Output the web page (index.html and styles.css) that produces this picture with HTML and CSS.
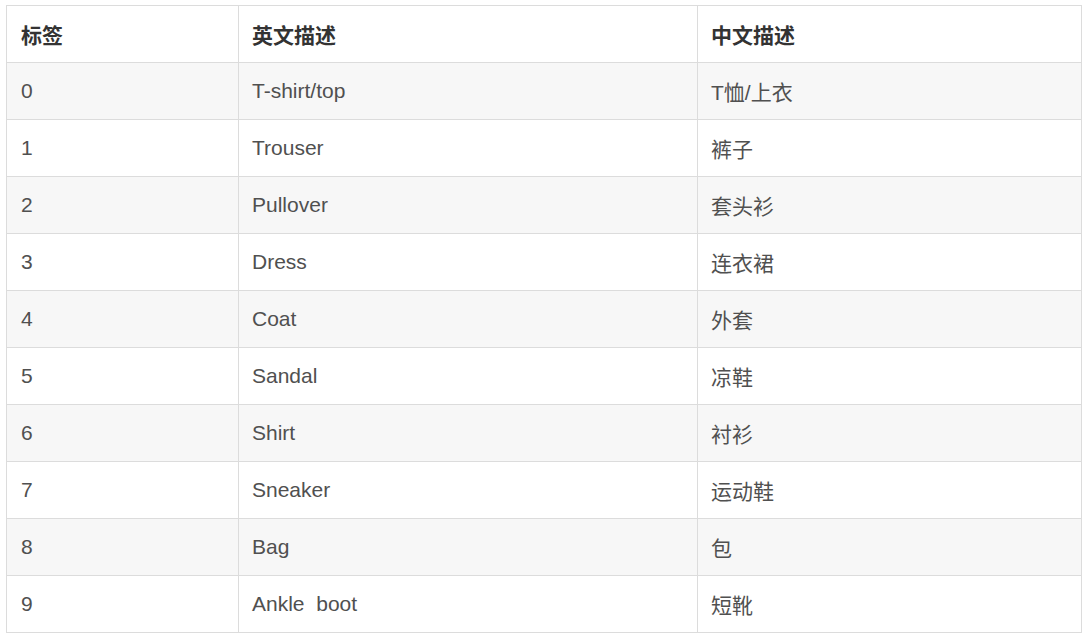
FILE: index.html
```html
<!DOCTYPE html>
<html lang="zh-CN">
<head>
<meta charset="utf-8">
<title>Fashion-MNIST 标签</title>
<link rel="stylesheet" href="styles.css">
</head>
<body>
<table class="labels">
  <colgroup>
    <col class="c1"><col class="c2"><col class="c3">
  </colgroup>
  <thead>
    <tr><th>标签</th><th>英文描述</th><th>中文描述</th></tr>
  </thead>
  <tbody>
    <tr><td>0</td><td>T-shirt/top</td><td>T恤/上衣</td></tr>
    <tr><td>1</td><td>Trouser</td><td>裤子</td></tr>
    <tr><td>2</td><td>Pullover</td><td>套头衫</td></tr>
    <tr><td>3</td><td>Dress</td><td>连衣裙</td></tr>
    <tr><td>4</td><td>Coat</td><td>外套</td></tr>
    <tr><td>5</td><td>Sandal</td><td>凉鞋</td></tr>
    <tr><td>6</td><td>Shirt</td><td>衬衫</td></tr>
    <tr><td>7</td><td>Sneaker</td><td>运动鞋</td></tr>
    <tr><td>8</td><td>Bag</td><td>包</td></tr>
    <tr><td>9</td><td>Ankle&nbsp; boot</td><td>短靴</td></tr>
  </tbody>
</table>
</body>
</html>
```
FILE: styles.css
```css
html, body {
  margin: 0;
  padding: 0;
  background: #ffffff;
}
body {
  padding: 5px 6px;
  font-family: "Liberation Sans", Arial, "Noto Sans CJK SC", sans-serif;
}
.labels {
  border-collapse: collapse;
  width: 1075px;
  table-layout: fixed;
  font-size: 21px;
  color: #505050;
}
.c1 { width: 232px; }
.c2 { width: 459px; }
.c3 { width: 384px; }
.labels th,
.labels td {
  border: 1px solid #dcdcdc;
  height: 57px;
  box-sizing: border-box;
  padding: 0 13px;
  text-align: left;
  vertical-align: middle;
  font-weight: normal;
}
.labels th {
  color: #333333;
  font-weight: bold;
  background: #ffffff;
}
.labels th:first-child,
.labels td:first-child {
  padding-left: 14px;
}
.labels tbody tr:nth-child(odd) td {
  background: #f7f7f7;
}
.labels tbody tr:nth-child(even) td {
  background: #ffffff;
}
```
